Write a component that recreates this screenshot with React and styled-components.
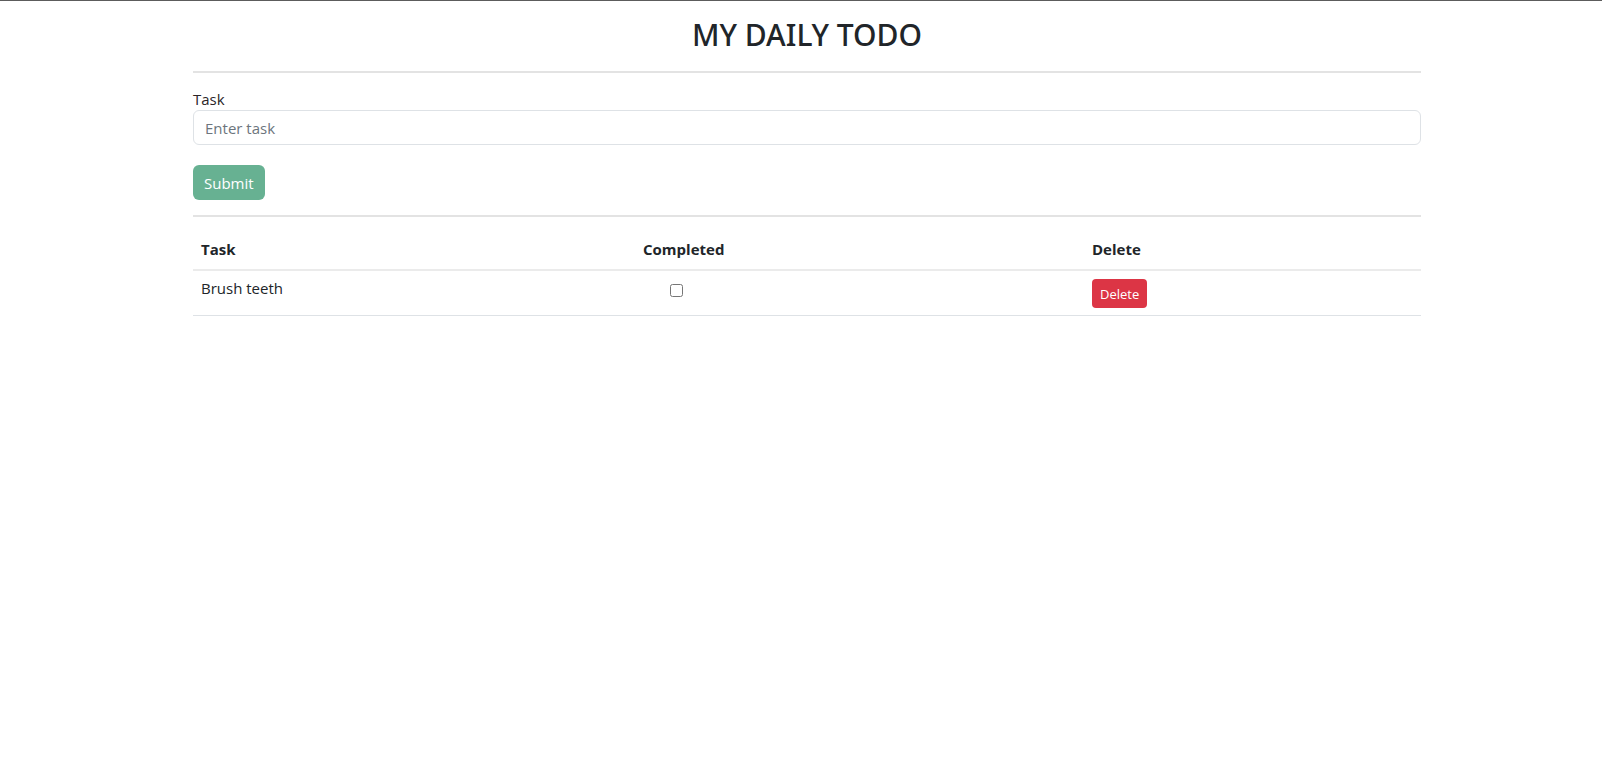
import React, { useState } from 'react';
import styled, { createGlobalStyle } from 'styled-components';

const GlobalStyle = createGlobalStyle`
  * { box-sizing: border-box; }
  body {
    margin: 0;
    border-top: 1px solid #5c5c5c;
    background: #fff;
    color: #212529;
    font-family: "Open Sans", "Noto Sans", Arial, sans-serif;
    font-size: 16px;
    line-height: 1.5;
  }
`;

const Wrapper = styled.div`
  width: 1228px;
  margin-left: 193px;
`;

const Title = styled.h2`
  margin: 15px 0 0;
  text-align: center;
  font-family: "Noto Sans", "Open Sans", Arial, sans-serif;
  font-size: 30px;
  font-weight: 500;
  line-height: 38px;
  color: #212529;
`;

const Rule = styled.hr`
  margin: ${p => p.top || 16}px 0 0;
  border: 0;
  border-top: 2px solid #e3e3e3;
`;

const Form = styled.form`
  display: flex;
  flex-direction: column;
  align-items: flex-start;
  padding-top: 15px;
`;

const Label = styled.label`
  font-size: 15px;
  line-height: 22px;
  color: #2b2528;
`;

const Input = styled.input`
  width: 100%;
  height: 35px;
  padding: 0 11px;
  border: 1px solid #dee2e6;
  border-radius: 6px;
  font-family: inherit;
  font-size: 15px;
  color: #212529;
  outline: none;

  &::placeholder {
    color: #6c757d;
  }
`;

const Button = styled.button`
  height: ${p => (p.small ? 29 : 35)}px;
  padding: 0 ${p => (p.small ? 8 : 11)}px;
  border: 0;
  border-radius: ${p => (p.small ? 4 : 6)}px;
  background: ${p => p.bg};
  color: #fff;
  font-family: inherit;
  font-size: ${p => (p.small ? 13 : 15)}px;
  cursor: pointer;
`;

const SubmitRow = styled.div`
  margin-top: 20px;
`;

const Table = styled.table`
  width: 100%;
  margin-top: 12px;
  border-collapse: collapse;
  table-layout: fixed;
`;

const Th = styled.th`
  padding: 8px;
  text-align: left;
  font-size: 15px;
  font-weight: 700;
  line-height: 24px;
  border-bottom: 2px solid #ebebeb;
`;

const Td = styled.td`
  padding: 8px 8px 7px;
  font-size: 15px;
  line-height: 18px;
  vertical-align: top;
  border-bottom: 1px solid #dee2e6;
`;

const CheckCell = styled(Td)`
  padding-left: 31px;
`;

const Checkbox = styled.input`
  display: block;
  width: 13px;
  height: 13px;
  margin: 5px 0 0 4px;
`;

export default function App() {
  const [task, setTask] = useState('');
  const [todos, setTodos] = useState([{ id: 1, name: 'Brush teeth', done: false }]);

  const submit = e => {
    e.preventDefault();
    if (!task.trim()) return;
    setTodos([...todos, { id: Date.now(), name: task, done: false }]);
    setTask('');
  };

  return (
    <>
      <GlobalStyle />
      <Wrapper>
        <Title>MY DAILY TODO</Title>
        <Rule top={17} />
        <Form onSubmit={submit}>
          <Label htmlFor="task">Task</Label>
          <Input
            id="task"
            placeholder="Enter task"
            value={task}
            onChange={e => setTask(e.target.value)}
          />
          <SubmitRow>
            <Button type="submit" bg="#67b192">Submit</Button>
          </SubmitRow>
        </Form>
        <Rule top={15} />
        <Table>
          <colgroup>
            <col style={{ width: 442 }} />
            <col style={{ width: 449 }} />
            <col />
          </colgroup>
          <thead>
            <tr>
              <Th>Task</Th>
              <Th>Completed</Th>
              <Th>Delete</Th>
            </tr>
          </thead>
          <tbody>
            {todos.map(t => (
              <tr key={t.id}>
                <Td>{t.name}</Td>
                <CheckCell>
                  <Checkbox
                    type="checkbox"
                    checked={t.done}
                    onChange={() =>
                      setTodos(todos.map(x => (x.id === t.id ? { ...x, done: !x.done } : x)))
                    }
                  />
                </CheckCell>
                <Td>
                  <Button small bg="#dc3545" onClick={() => setTodos(todos.filter(x => x.id !== t.id))}>
                    Delete
                  </Button>
                </Td>
              </tr>
            ))}
          </tbody>
        </Table>
      </Wrapper>
    </>
  );
}
